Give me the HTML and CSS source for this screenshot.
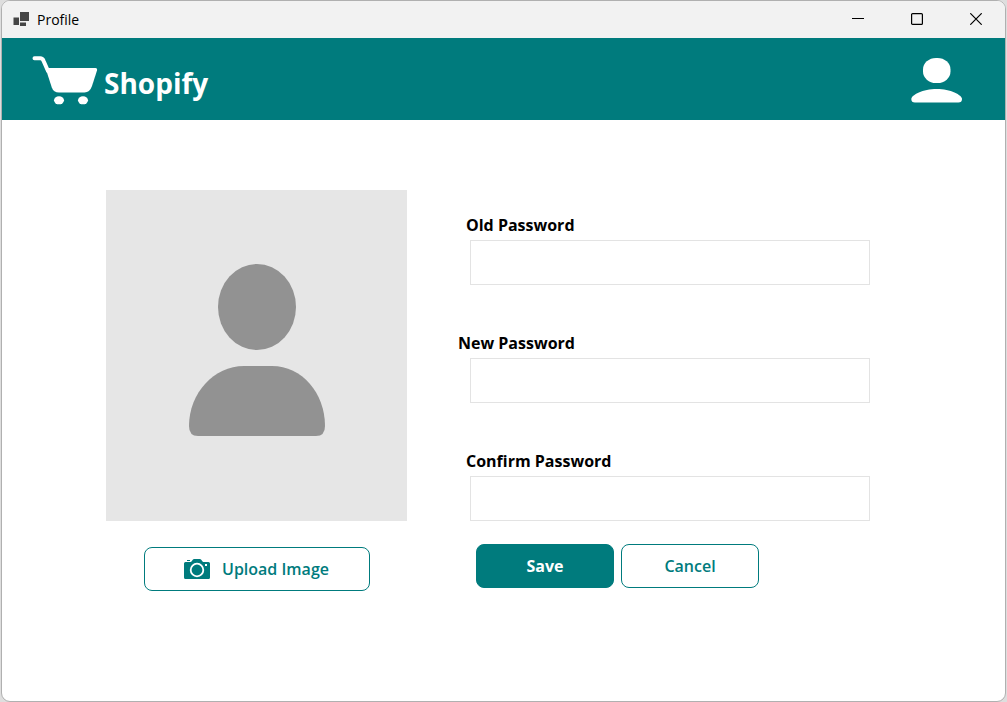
FILE: index.html
```html
<!DOCTYPE html>
<html lang="en">
<head>
<meta charset="utf-8">
<title>Profile</title>
<link rel="stylesheet" href="styles.css">
</head>
<body>
<div class="window">
  <div class="titlebar">
    <svg class="app-icon" width="16" height="16" viewBox="0 0 16 16" aria-hidden="true">
      <path fill="#454545" d="M7 0h9v9H7zM.5 5.500H6V13H.5zM7 10.500h6V14H7z"/>
    </svg>
    <span class="window-title">Profile</span>
    <div class="window-controls">
      <button class="control" aria-label="Minimize"><svg width="12" height="12" viewBox="0 0 12 12"><path d="M0 5.5h12"/></svg></button>
      <button class="control" aria-label="Maximize"><svg width="12" height="12" viewBox="0 0 12 12"><rect x=".6" y=".6" width="10.8" height="10.8" rx="1"/></svg></button>
      <button class="control" aria-label="Close"><svg width="12" height="12" viewBox="0 0 12 12"><path d="M.3.3l11.4 11.4M11.7.3L.3 11.7"/></svg></button>
    </div>
  </div>
  <header class="header">
    <div class="brand">
      <svg width="66" height="50" viewBox="0 0 66 50" aria-hidden="true">
        <path d="M2.500 2.300h5.700Q10.500 2.300 11.500 4.800L16 15" fill="none" stroke="#fff" stroke-width="4" stroke-linecap="round"/>
        <path fill="#fff" d="M13.500 12H63.500q2 0 1.500 2.500l-5 15.500q-2.200 6.500-7.500 6.500H27q-5.500 0-7.200-5z"/>
        <ellipse cx="27" cy="44.300" rx="5" ry="4" fill="#fff"/>
        <ellipse cx="51" cy="44.300" rx="5" ry="4" fill="#fff"/>
      </svg>
      <span class="brand-name">Shopify</span>
    </div>
    <button class="account" aria-label="Account">
      <svg width="52" height="46" viewBox="0 0 52 46">
        <rect x="12" y="0" width="27.500" height="25" rx="13" ry="11.500" fill="#fff"/>
        <path fill="#fff" d="M4 44.500Q.3 44.500.3 41C.3 37 12 31 25.700 31S51 37 51 41q0 3.500-3.700 3.500z"/>
      </svg>
    </button>
  </header>
  <main class="content">
    <section class="photo-panel">
      <svg class="photo" viewBox="0 0 301 331" role="img" aria-label="Profile picture">
        <rect width="301" height="331" fill="#e6e6e6"/>
        <ellipse cx="151" cy="117" rx="39" ry="43" fill="#929292"/>
        <path fill="#929292" d="M138 176h28c30 0 53 27 53 60q0 10-9 10H92q-9 0-9-10c0-33 25-60 55-60z"/>
      </svg>
      <button class="button upload">
        <svg width="26" height="21" viewBox="0 0 26 21" aria-hidden="true">
          <path fill="#007b7d" d="M1.500 3H7l2-2.500Q9.400 0 10 0h6q.6 0 1 .5L19 3h5.500Q26 3 26 4.500v14q0 1.500-1.500 1.500h-23Q0 20 0 18.500v-14Q0 3 1.500 3zM3 1h3v1H3z"/>
          <circle cx="13" cy="11" r="6.300" fill="#007b7d" stroke="#fff" stroke-width="1.800"/>
          <rect x="21" y="5" width="2" height="2" fill="#fff"/>
        </svg>
        <span>Upload Image</span>
      </button>
    </section>
    <form class="form">
      <div class="field">
        <label class="label" for="old">Old Password</label>
        <input class="input" id="old" type="password">
      </div>
      <div class="field">
        <label class="label label-outset" for="new">New Password</label>
        <input class="input" id="new" type="password">
      </div>
      <div class="field">
        <label class="label" for="confirm">Confirm Password</label>
        <input class="input" id="confirm" type="password">
      </div>
      <div class="actions">
        <button class="button primary" type="submit">Save</button>
        <button class="button" type="button">Cancel</button>
      </div>
    </form>
  </main>
</div>
</body>
</html>
```

FILE: styles.css
```css
* { box-sizing: border-box; }

body {
  margin: 0;
  background: #dedede;
  color: #000;
  font-family: "Open Sans", "Noto Sans", sans-serif;
  font-size: 16px;
}

button, input { font: inherit; }

.window {
  display: flex;
  flex-direction: column;
  min-height: 100vh;
  margin: 0 1px;
  border: 1px solid #b0b0b0;
  border-radius: 9px;
  background: #fff;
  overflow: hidden;
}

.titlebar {
  display: flex;
  align-items: center;
  height: 37px;
  padding-left: 11px;
  background: #f2f2f2;
}

.window-title {
  margin-left: 8px;
  font-size: 14px;
  line-height: 20px;
}

.window-controls { display: flex; margin-left: auto; }

.control {
  display: flex;
  align-items: center;
  justify-content: center;
  width: 59px;
  height: 37px;
  padding: 0 0 1px;
  border: 0;
  background: none;
}

.control svg { fill: none; stroke: #000; stroke-width: 1.2; }

.header {
  display: flex;
  align-items: center;
  justify-content: space-between;
  height: 82px;
  padding: 4px 42px 0 30px;
  background: #007b7d;
}

.brand { display: flex; align-items: center; gap: 6px; color: #fff; }

.brand-name {
  padding-top: 4px;
  font-size: 28px;
  font-weight: 700;
  line-height: 36px;
}

.account { display: flex; padding: 0; border: 0; background: none; }

.content {
  display: flex;
  align-items: flex-start;
  gap: 51px;
  padding: 70px 135px 40px 104px;
}

.photo-panel {
  display: flex;
  flex: 3;
  flex-direction: column;
  align-items: center;
  gap: 26px;
  max-width: 301px;
}

.photo { display: block; width: 100%; }

.form { flex: 4; padding-top: 23px; }

.field {
  display: flex;
  flex-direction: column;
  gap: 3px;
  margin-bottom: 46px;
}

.field:nth-child(3) { margin-bottom: 23px; }

.label {
  padding-left: 8px;
  font-weight: 700;
  line-height: 24px;
}

.label-outset { padding-left: 0; }

.input {
  height: 45px;
  margin-left: 12px;
  padding: 0 12px;
  border: 1px solid #e3e3e3;
  background: #fff;
}

.actions { display: flex; gap: 7px; padding-left: 18px; }

.button {
  display: flex;
  align-items: center;
  justify-content: center;
  gap: 12px;
  width: 138px;
  height: 44px;
  border: 1px solid #007b7d;
  border-radius: 8px;
  background: #fff;
  color: #007b7d;
  font-weight: 600;
}

.upload { width: 226px; }

.primary { background: #007b7d; color: #fff; font-weight: 700; }
```
